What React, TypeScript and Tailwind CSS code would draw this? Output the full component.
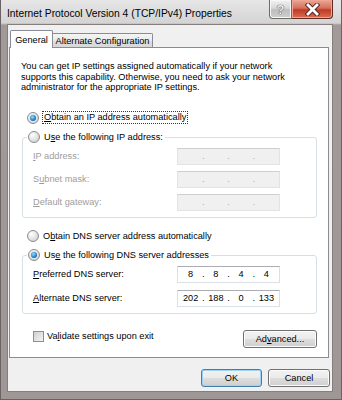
import React from 'react';

function Radio({ checked }: { checked?: boolean }) {
  return (
    <span className="flex h-[12px] w-[12px] shrink-0 items-center justify-center rounded-full border border-[#8a8c8e] bg-[radial-gradient(circle_at_35%_30%,#ffffff,#e2e2e2_55%,#c6c6c6)]">
      {checked && (
        <span className="flex h-[8px] w-[8px] items-center justify-center rounded-full bg-[#d5e7f3]">
          <span className="h-[6px] w-[6px] rounded-full bg-[radial-gradient(circle_at_40%_35%,#9adbfb,#2c83c7_55%,#123f66)]" />
        </span>
      )}
    </span>
  );
}

function IpBox({ parts, disabled }: { parts: string[]; disabled?: boolean }) {
  return (
    <div
      className={
        disabled
          ? 'flex h-[17px] w-[103px] items-center border border-[#e3e3e3] border-t-[#cfcfcf] bg-[#f0f0f0] text-[#a8a8a8]'
          : 'flex h-[17px] w-[103px] items-center border border-[#dbdfe6] border-t-[#abadb3] bg-white text-black'
      }
    >
      {parts.map((p, i) => (
        <React.Fragment key={i}>
          {i > 0 && <span className="flex w-0 justify-center">.</span>}
          <span className="flex-1 text-center">{p}</span>
        </React.Fragment>
      ))}
    </div>
  );
}

function Button({ children, primary, className }: { children: React.ReactNode; primary?: boolean; className?: string }) {
  return (
    <div
      className={
        (primary
          ? 'border-[#3c7fb1] shadow-[inset_0_0_0_1px_#9fd3f4] '
          : 'border-[#707070] shadow-[inset_0_0_0_1px_#fcfcfc] ') +
        'flex items-center justify-center rounded-[3px] border bg-[linear-gradient(#f2f2f2,#ebebeb_48%,#dddddd_52%,#cfcfcf)] text-black ' +
        (className ?? '')
      }
    >
      {children}
    </div>
  );
}

function HelpButton() {
  return (
    <div className="flex h-[19px] w-[23px] items-center justify-center rounded-bl-[4px] border border-t-0 border-[#6d6a6a] bg-[linear-gradient(#f2f2f2,#d8d8d8_45%,#bdbdbd_55%,#cfcfcf)] shadow-[inset_0_0_0_1px_#f7f7f7]">
      <span className="text-[13px] font-bold leading-none text-[#eeeeee] [text-shadow:0_0_1px_#444,0_0_1px_#444]">?</span>
    </div>
  );
}

function CloseButton() {
  return (
    <div className="flex h-[19px] w-[41px] items-center justify-center rounded-br-[4px] border border-l-0 border-t-0 border-[#5f2a22] bg-[linear-gradient(#e9a797,#d5705c_45%,#c03a24_55%,#d86e55)] shadow-[inset_0_0_0_1px_#eea594]">
      <svg width="15" height="13" viewBox="0 0 15 13">
        <path d="M3 2 L12 11 M12 2 L3 11" stroke="#5a2218" strokeWidth="4.6" strokeLinecap="square" />
        <path d="M3 2 L12 11 M12 2 L3 11" stroke="#ffffff" strokeWidth="2.8" strokeLinecap="square" />
      </svg>
    </div>
  );
}

function FieldRow({ label, parts, disabled }: { label: React.ReactNode; parts: string[]; disabled?: boolean }) {
  return (
    <div className="flex h-[17px] items-center">
      <span className={disabled ? 'w-[154px] pl-[10px] text-[#9d9d9d]' : 'w-[154px] pl-[10px] text-black'}>{label}</span>
      <IpBox parts={parts} disabled={disabled} />
    </div>
  );
}

export default function App() {
  return (
    <div className="flex h-[400px] w-[342px] flex-col overflow-hidden bg-[linear-gradient(to_bottom,#e6e6e6,#d4d4d4_23px,#a29a98_25px,#9f9795)] font-['Liberation_Sans',Arial,sans-serif] text-[9.2px] leading-[12px] text-black shadow-[inset_1px_0_#6b6363,inset_-1px_0_#6b6363,inset_0_-1px_#6b6363]">
      {/* title bar */}
      <div className="flex h-[24px] shrink-0 items-start">
        <div className="pl-[7px] pt-[7px] text-[10.3px] leading-[13px] text-black">
          Internet Protocol Version 4 (TCP/IPv4) Properties
        </div>
        <div className="ml-auto mr-[9px] flex">
          <HelpButton />
          <CloseButton />
        </div>
      </div>

      {/* client area */}
      <div className="ml-[7px] flex h-[368px] w-[326px] shrink-0 flex-col border border-[#857e7c] bg-[#f0f0f0]">
        {/* tabs */}
        <div className="mt-[5px] flex h-[17px] items-end pl-[2px]">
          <div className="relative z-10 -mb-px flex h-[18px] w-[43px] items-start justify-center rounded-t-[2px] border border-b-0 border-[#898c95] bg-white pt-[3px]">
            General
          </div>
          <div className="-ml-px flex h-[14px] w-[101px] items-center justify-center rounded-tr-[2px] border border-b-0 border-[#898c95] bg-[linear-gradient(#f4f4f4,#eaeaea_50%,#dedede_50%,#d8d8d8)]">
            Alternate Configuration
          </div>
        </div>

        {/* tab panel */}
        <div className="ml-[1px] flex h-[311px] w-[320px] flex-col border border-[#898c95] bg-white">
          <p className="ml-[11px] mt-[13px] leading-[10.5px]">
            You can get IP settings assigned automatically if your network
            <br />
            supports this capability. Otherwise, you need to ask your network
            <br />
            administrator for the appropriate IP settings.
          </p>

          <div className="ml-[17px] mt-[18px] flex h-[14px] items-center gap-[3px]">
            <Radio checked />
            <span className="border border-dotted border-[#333] px-px leading-[11px]">
              <u className="underline-offset-1">O</u>btain an IP address automatically
            </span>
          </div>

          {/* static IP group */}
          <div className="ml-[12px] mt-[12px] flex h-[81px] w-[295px] flex-col rounded-[3px] border border-[#d5dfe5]">
            <div className="-mt-[8px] ml-[4px] flex h-[14px] w-fit items-center gap-[4px] bg-white pl-px pr-[2px]">
              <Radio />
              <span>
                U<u className="underline-offset-1">s</u>e the following IP address:
              </span>
            </div>
            <div className="mt-[4px] flex flex-col gap-[6px]">
              <FieldRow disabled label={<><u className="underline-offset-1">I</u>P address:</>} parts={['', '', '', '']} />
              <FieldRow disabled label={<>S<u className="underline-offset-1">u</u>bnet mask:</>} parts={['', '', '', '']} />
              <FieldRow disabled label={<><u className="underline-offset-1">D</u>efault gateway:</>} parts={['', '', '', '']} />
            </div>
          </div>

          <div className="ml-[17px] mt-[11px] flex h-[14px] items-center gap-[4px]">
            <Radio />
            <span>
              O<u className="underline-offset-1">b</u>tain DNS server address automatically
            </span>
          </div>

          {/* DNS group */}
          <div className="ml-[12px] mt-[12px] flex h-[59px] w-[295px] flex-col rounded-[3px] border border-[#d5dfe5]">
            <div className="-mt-[8px] ml-[4px] flex h-[14px] w-fit items-center gap-[4px] bg-white pl-px pr-[2px]">
              <Radio checked />
              <span>
                Us<u className="underline-offset-1">e</u> the following DNS server addresses
              </span>
            </div>
            <div className="mt-[4px] flex flex-col gap-[7px]">
              <FieldRow label={<><u className="underline-offset-1">P</u>referred DNS server:</>} parts={['8', '8', '4', '4']} />
              <FieldRow label={<><u className="underline-offset-1">A</u>lternate DNS server:</>} parts={['202', '188', '0', '133']} />
            </div>
          </div>

          <div className="ml-[23px] mr-[11px] mt-[16px] flex items-start">
            <span className="mt-px h-[11px] w-[11px] shrink-0 border border-[#8e8f8f] bg-[linear-gradient(135deg,#cfcfcf,#f4f4f4)]" />
            <span className="ml-[3px] mt-px leading-[11px]">
              Va<u className="underline-offset-1">l</u>idate settings upon exit
            </span>
            <Button className="ml-auto h-[18px] w-[74px]">
              Ad<u className="underline-offset-1">v</u>anced...
            </Button>
          </div>
        </div>

        {/* dialog buttons */}
        <div className="mr-[2px] mt-[11px] flex justify-end gap-[6px]">
          <Button primary className="h-[18px] w-[61px]">OK</Button>
          <Button className="h-[18px] w-[62px]">Cancel</Button>
        </div>
      </div>
    </div>
  );
}
